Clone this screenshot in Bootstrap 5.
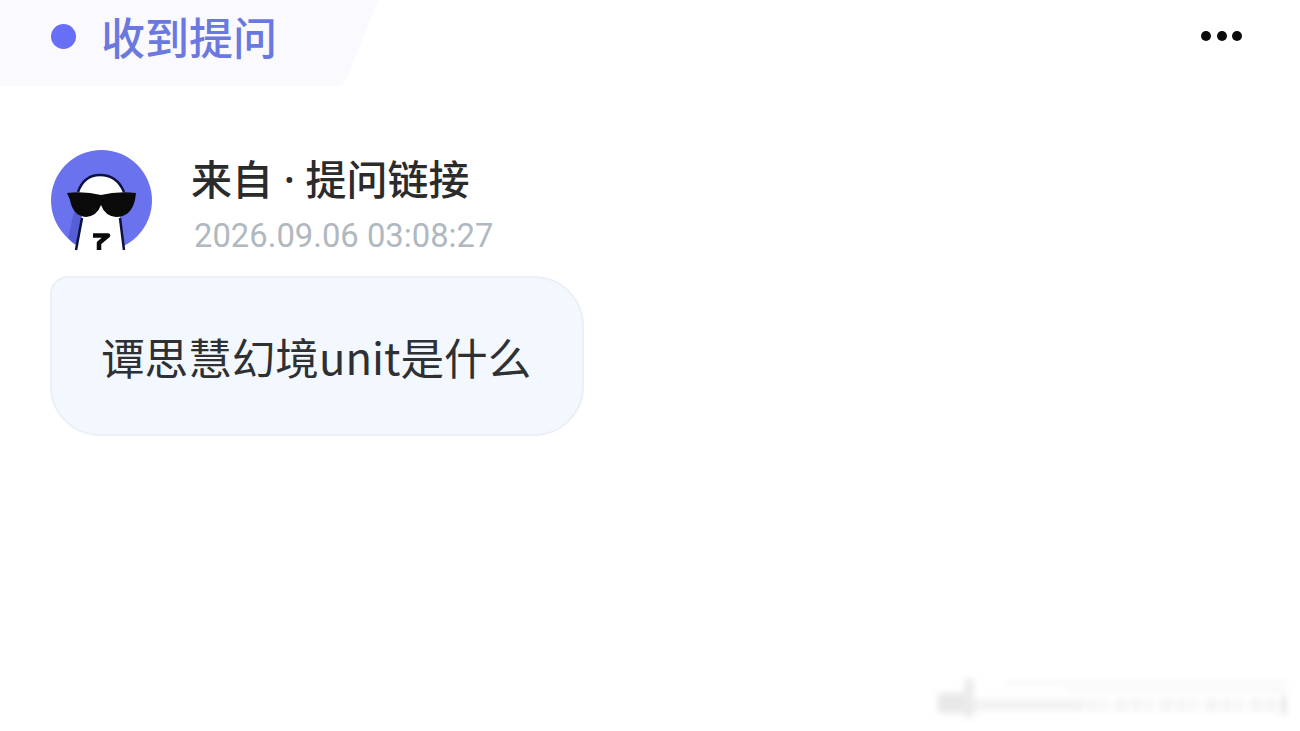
<!DOCTYPE html>
<html lang="zh-CN">
<head>
    <meta charset="UTF-8">
    <meta name="viewport" content="width=device-width, initial-scale=1.0">
    <title>收到提问</title>
    <link href="https://cdn.jsdelivr.net/npm/bootstrap@5.3.2/dist/css/bootstrap.min.css" rel="stylesheet">
    <style>
        body {
            width: 1300px;
            height: 731px;
            overflow: hidden;
            background: #fff;
            font-family: "Noto Sans CJK SC", "Noto Sans", sans-serif;
        }
        .tag-bar {
            width: 378px;
            height: 86px;
            padding: 0 0 14px 51px;
            gap: 25px;
            background: #f9f9fe;
            clip-path: polygon(0 0, 100% 0, 346px 80px, 341px 86px, 0 86px);
        }
        .tag-dot {
            width: 25px;
            height: 25px;
            border-radius: 50%;
            background: #666ff6;
        }
        .tag-title {
            font-size: 44px;
            line-height: 1;
            font-weight: 500;
            color: #6b78df;
        }
        .more-dots {
            right: 58px;
            top: 31px;
            gap: 5.5px;
        }
        .more-dots span {
            width: 10px;
            height: 10px;
            border-radius: 50%;
            background: #0a0a0a;
        }
        .from-row {
            height: 101px;
            margin: 64px 0 0 51px;
            gap: 39px;
        }
        .avatar-pic {
            width: 101px;
            height: 101px;
            display: block;
        }
        .from-name {
            font-family: "Noto Sans", "Noto Sans CJK SC", sans-serif;
            font-size: 41px;
            line-height: 1;
            font-weight: 500;
            color: #2b2b2b;
            margin-top: 9px;
        }
        .from-time {
            font-family: "Roboto", "Noto Sans", sans-serif;
            font-size: 32.8px;
            line-height: 1;
            color: #b0b8c0;
            margin: 20px 0 0 3px;
        }
        .ask-bubble {
            width: 534px;
            height: 160px;
            margin: 25px 0 0 50px;
            padding: 2px 0 0 49px;
            background: #f3f8fe;
            border: 2px solid #e9f0f8;
            border-radius: 18px 50px 50px 50px;
            font-size: 43.6px;
            color: #2e3033;
        }
        .mark-blur {
            right: 10px;
            bottom: 10px;
            width: 354px;
            height: 44px;
            filter: blur(3px);
        }
    </style>
</head>
<body class="position-relative">
    <div class="tag-bar d-flex align-items-center">
        <div class="tag-dot flex-shrink-0"></div>
        <div class="tag-title">收到提问</div>
    </div>
    <div class="more-dots position-absolute d-flex">
        <span></span><span></span><span></span>
    </div>

    <div class="from-row d-flex">
        <svg class="avatar-pic flex-shrink-0" viewBox="0 0 101 101">
            <circle cx="50.5" cy="50.5" r="50.5" fill="#6b72ee"/>
            <path d="M24 58 L31 68 L25 95 Q20 92 17 88Z" fill="#565ed6"/>
            <path d="M25 101 L31 66 Q22 44 30 36 Q38 25 49 25 Q62 25 70 36 Q77 46 69 66 L73 101Z" fill="#fff"/>
            <path d="M25 100 L31 68 M73 100 L69 68 M27 42 Q33 25 49 25 Q66 25 73 42" fill="none" stroke="#0c1240" stroke-width="2.5"/>
            <path d="M16 43 Q34 41 50 45 Q66 41 85 43 L84 50 Q80 67 65 67 Q54 66 50 55 Q46 66 35 67 Q22 66 19 50Z" fill="#0a0a0a"/>
            <path d="M42 85.5 H57 L48 93 V100" fill="none" stroke="#0a0a0a" stroke-width="4.5" stroke-linejoin="round"/>
        </svg>
        <div>
            <div class="from-name">来自 · 提问链接</div>
            <div class="from-time">2026.09.06 03:08:27</div>
        </div>
    </div>

    <div class="ask-bubble d-flex align-items-center">谭思慧幻境unit是什么</div>

    <svg class="mark-blur position-absolute" viewBox="0 0 354 44">
        <rect x="2" y="16" width="28" height="20" fill="#e8e8e8"/>
        <rect x="28" y="2" width="10" height="38" fill="#ebebeb"/>
        <rect x="38" y="22" width="110" height="12" fill="#f3f3f3"/>
        <path d="M150 28 H346" stroke="#f5f5f5" stroke-width="14" stroke-dasharray="11 4 7 6 14 3"/>
        <path d="M70 6 H350 M130 13 H350" stroke="#eeeeee" stroke-width="2"/>
        <path d="M348 18 V38" stroke="#c4c4c4" stroke-width="2"/>
    </svg>

    <script src="https://cdn.jsdelivr.net/npm/bootstrap@5.3.2/dist/js/bootstrap.bundle.min.js"></script>
</body>
</html>
